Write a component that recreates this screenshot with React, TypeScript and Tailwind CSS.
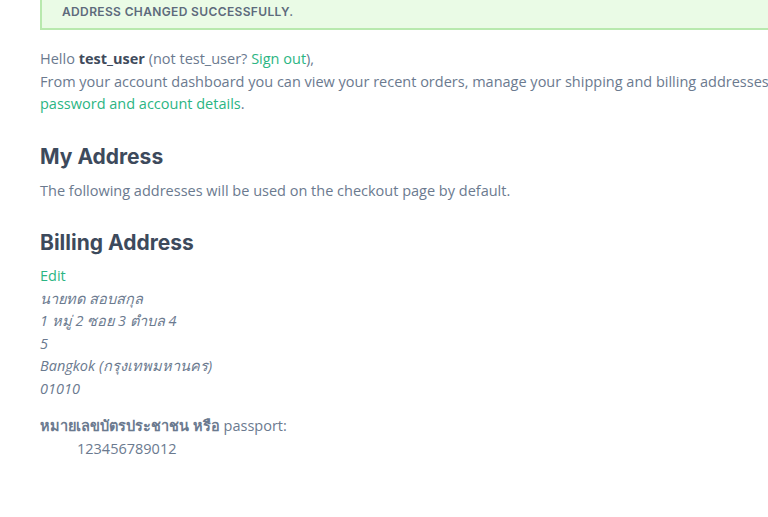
export default function App() {
  const body = { fontFamily: "'Open Sans', Lato, sans-serif" };
  const head = { fontFamily: "Inter, 'Liberation Sans', sans-serif" };

  return (
    <div className="w-[768px] h-[517px] overflow-hidden bg-white">
      <div className="w-[1000px] pl-10 text-[14.5px] leading-[22.5px] text-[#6b7a8f]" style={body}>
        {/* Notice */}
        <div className="-mt-3 border-2 border-[#b8e9ae] bg-[#eafbe6] pl-5 pt-[12px] pb-[6px]">
          <p className="text-[12px] leading-[20px] font-semibold tracking-[0.03em] uppercase text-[#5d6a7c]" style={head}>
            Address changed successfully.
          </p>
        </div>

        {/* Greeting */}
        <div className="mt-[18px]">
          <p>
            Hello <strong className="font-bold text-[#3f4b5c]">test_user</strong> (not test_user?{" "}
            <a className="text-[#2bb583]">Sign out</a>),
          </p>
          <p>
            From your account dashboard you can view your recent orders, manage your shipping and billing addresses, and edit your
            <br />
            <a className="text-[#2bb583]">password and account details</a>.
          </p>
        </div>

        {/* My Address */}
        <h2 className="mt-[26px] text-[21px] leading-[30px] font-bold text-[#3d4a5c]" style={head}>
          My Address
        </h2>
        <p className="mt-[8px]">The following addresses will be used on the checkout page by default.</p>

        <h3 className="mt-[26px] text-[21px] leading-[30px] font-bold text-[#3d4a5c]" style={head}>
          Billing Address
        </h3>
        <div className="mt-[7px]">
          <a className="text-[#2bb583]">Edit</a>
        </div>
        <address className="italic">
          นายทด สอบสกุล
          <br />
          1 หมู่ 2 ซอย 3 ตำบล 4
          <br />
          5
          <br />
          Bangkok (กรุงเทพมหานคร)
          <br />
          01010
        </address>

        <div className="mt-[15px]">
          <p>
            <span className="font-semibold">หมายเลขบัตรประชาชน หรือ</span> passport:
          </p>
          <p className="pl-[37px]">123456789012</p>
        </div>
      </div>
    </div>
  );
}
